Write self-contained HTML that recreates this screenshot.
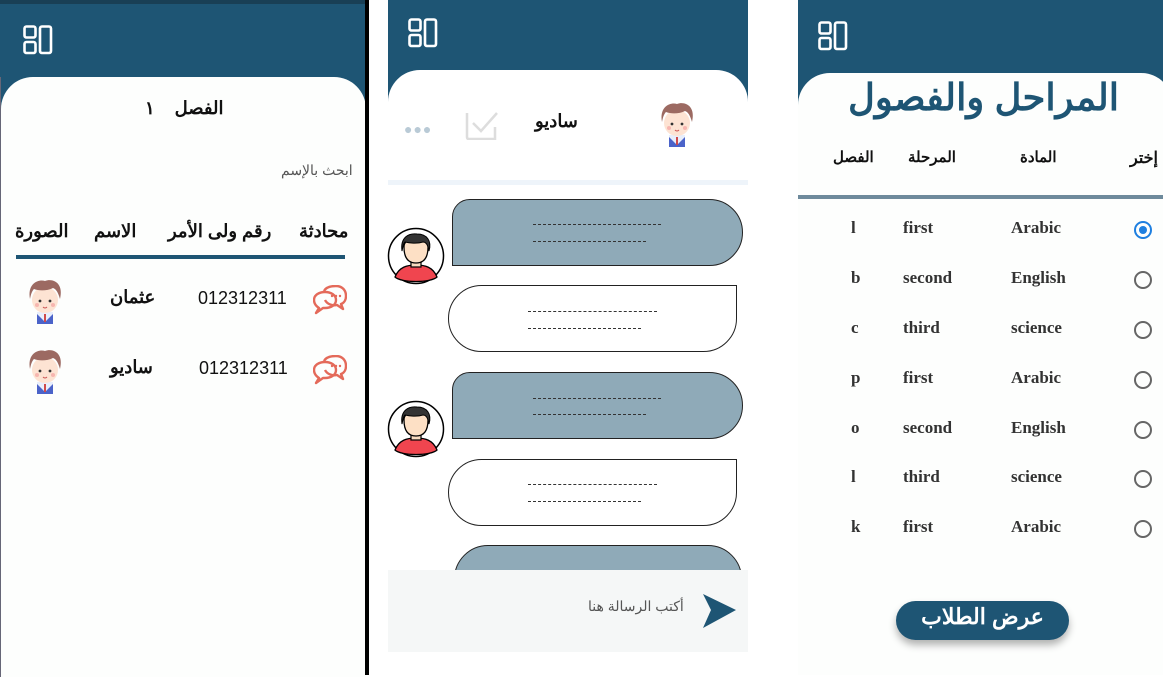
<!DOCTYPE html>
<html><head><meta charset="utf-8"><style>
*{margin:0;padding:0;box-sizing:border-box}
body{width:1163px;height:675px;background:#fff;position:relative;overflow:hidden;font-family:"Liberation Sans","Noto Sans CJK SC",sans-serif;color:#111}
.abs{position:absolute}
.hdr{background:#1e5574}
.card{background:#fdfefd;border-radius:32px 32px 0 0}
.t{position:absolute;white-space:nowrap;direction:rtl}
.dash{position:absolute;height:1px;border-top:1px dashed #333}
.rowtxt{position:absolute;font-family:"Liberation Serif",serif;font-size:17px;color:#333;font-weight:bold}
.radio{position:absolute;width:18px;height:18px;border:2px solid #666;border-radius:50%}
</style></head><body>

<svg width="0" height="0" style="position:absolute">
<defs>
<symbol id="menu" viewBox="0 0 30 30"><g fill="none" stroke="#fff" stroke-width="2.6"><rect x="1.5" y="1.5" width="11" height="11" rx="2"/><rect x="1.5" y="17" width="11" height="11" rx="2"/><rect x="17" y="1.5" width="11" height="26.5" rx="2"/></g></symbol>
<symbol id="kid" viewBox="0 0 40 46">
<rect x="12" y="34" width="16" height="12" fill="#e8eefb"/><path d="M12 36 L20 44 L28 36 L28 46 L12 46Z" fill="#4b63c9"/><rect x="19" y="36" width="2" height="8" fill="#d04a4a"/>
<ellipse cx="20" cy="22" rx="13" ry="13" fill="#fde3d3"/>
<path d="M5 21 C2 5 14 1 20 3 C28 0 39 5 35 21 C33 14 31 11 28 10 C22 13 14 13 9 11 C7 13 6 16 5 21Z" fill="#9c6a62"/>
<circle cx="15" cy="23" r="1.4" fill="#333"/><circle cx="25" cy="23" r="1.4" fill="#333"/>
<circle cx="12" cy="27" r="2" fill="#f7b6b0"/><circle cx="28" cy="27" r="2" fill="#f7b6b0"/>
<path d="M18 29 Q20 31 22 29" stroke="#c55" fill="none" stroke-width="1"/></symbol>
<symbol id="man" viewBox="0 0 58 58">
<circle cx="29" cy="29" r="27.5" fill="#fff" stroke="#000" stroke-width="1.5"/>
<path d="M8 50 C12 40 20 38 29 38 C38 38 46 40 50 50 C44 56 14 56 8 50Z" fill="#f0454f" stroke="#000" stroke-width="1.3"/>
<rect x="24" y="30" width="10" height="10" fill="#fadcc0" stroke="#000" stroke-width="1.2"/>
<path d="M17 20 Q17 36 29 36 Q41 36 41 20 Q41 12 29 12 Q17 12 17 20Z" fill="#fde0c5" stroke="#000" stroke-width="1.3"/>
<path d="M15 24 C13 10 22 6 30 7 C40 7 45 14 42 24 C41 18 39 15 36 15 C30 17 22 16 18 15 C16 17 16 20 15 24Z" fill="#333" stroke="#000" stroke-width="1"/></symbol>
<symbol id="chat" viewBox="0 0 34 32"><g fill="none" stroke="#e46a5a" stroke-width="2.4" stroke-linejoin="round">
<path d="M11 6 C13 2 18 1 23 1 C29 1 33 5 33 11 C33 15 31 18 28 19 L30 24 L24 20 C19 21 14 19 12 15"/>
<path d="M3 28 L6 23 C3 21 1 18 1 15 C1 10 6 7 12 7 C18 7 23 10 23 15 C23 20 18 23 12 23 L10 23 Z"/></g>
<g fill="#e46a5a"><circle cx="19" cy="11" r="1.2"/><circle cx="23" cy="11" r="1.2"/><circle cx="27" cy="11" r="1.2"/></g></symbol>
</defs></svg>

<!-- PANEL 1 -->
<div class="abs hdr" style="left:0;top:0;width:366px;height:200px"></div>
<div class="abs" style="left:0;top:0;width:366px;height:4px;background:#193f55"></div>
<svg class="abs" style="left:23px;top:25px" width="30" height="30"><use href="#menu"/></svg>
<div class="abs card" style="left:1px;top:77px;width:365px;height:600px"></div>
<div class="abs" style="left:0;top:77px;width:1px;height:600px;background:#667"></div>
<div class="abs" style="left:365px;top:0;width:4px;height:675px;background:#000"></div>
<div class="t" style="left:145px;top:98px;font-size:18px;font-weight:bold">الفصل&nbsp;&nbsp;&nbsp;&nbsp;١</div>
<div class="t" style="left:281px;top:162px;font-size:14px;color:#555">ابحث بالإسم</div>
<div class="t" style="left:299px;top:221px;font-size:18px;font-weight:bold">محادثة</div>
<div class="t" style="left:168px;top:221px;font-size:18px;font-weight:bold">رقم ولى الأمر</div>
<div class="t" style="left:94px;top:221px;font-size:18px;font-weight:bold">الاسم</div>
<div class="t" style="left:15px;top:221px;font-size:18px;font-weight:bold">الصورة</div>
<div class="abs" style="left:16px;top:255px;width:329px;height:4px;background:#1e5574"></div>
<svg class="abs" style="left:25px;top:278px" width="40" height="46"><use href="#kid"/></svg>
<svg class="abs" style="left:25px;top:348px" width="40" height="46"><use href="#kid"/></svg>
<div class="t" style="left:110px;top:287px;font-size:18px;font-weight:bold">عثمان</div>
<div class="t" style="left:110px;top:357px;font-size:18px;font-weight:bold">ساديو</div>
<div class="abs" style="left:198px;top:288px;font-size:18px">012312311</div>
<div class="abs" style="left:199px;top:358px;font-size:18px">012312311</div>
<svg class="abs" style="left:313px;top:285px" width="34" height="32"><use href="#chat"/></svg>
<svg class="abs" style="left:313px;top:355px" width="34" height="32"><use href="#chat"/></svg>

<!-- PANEL 2 -->
<div class="abs hdr" style="left:388px;top:0;width:360px;height:150px"></div>
<svg class="abs" style="left:408px;top:18px" width="30" height="30"><use href="#menu"/></svg>
<div class="abs card" style="left:388px;top:70px;width:360px;height:605px;background:#fff"></div>
<svg class="abs" style="left:657px;top:101px" width="40" height="46"><use href="#kid"/></svg>
<div class="t" style="left:535px;top:111px;font-size:18px;font-weight:bold">ساديو</div>
<svg class="abs" style="left:465px;top:107px" width="34" height="33"><path d="M2 6 L2 30 Q2 32 4 32 L30 32 L30 20 M8 16 L16 24 L32 6" fill="none" stroke="#ddd" stroke-width="2.5"/></svg>
<div class="abs" style="left:404px;top:121px;font-size:14px;color:#b9cad6;letter-spacing:1px">●●●</div>
<div class="abs" style="left:388px;top:180px;width:360px;height:5px;background:#eef4fa"></div>

<div class="abs" style="left:452px;top:199px;width:291px;height:67px;background:#8faab8;border:1.3px solid #222;border-radius:18px 34px 34px 0"></div>
<div class="dash" style="left:533px;top:224px;width:128px"></div><div class="dash" style="left:533px;top:241px;width:113px"></div>
<svg class="abs" style="left:387px;top:227px" width="58" height="58"><use href="#man"/></svg>
<div class="abs" style="left:448px;top:285px;width:289px;height:67px;background:#fff;border:1.3px solid #222;border-radius:34px 0 34px 34px"></div>
<div class="dash" style="left:528px;top:311px;width:129px"></div><div class="dash" style="left:528px;top:328px;width:113px"></div>

<div class="abs" style="left:452px;top:372px;width:291px;height:67px;background:#8faab8;border:1.3px solid #222;border-radius:18px 34px 34px 0"></div>
<div class="dash" style="left:533px;top:398px;width:128px"></div><div class="dash" style="left:533px;top:414px;width:113px"></div>
<svg class="abs" style="left:387px;top:400px" width="58" height="58"><use href="#man"/></svg>
<div class="abs" style="left:448px;top:459px;width:289px;height:67px;background:#fff;border:1.3px solid #222;border-radius:34px 0 34px 34px"></div>
<div class="dash" style="left:528px;top:484px;width:129px"></div><div class="dash" style="left:528px;top:501px;width:113px"></div>
<div class="abs" style="left:454px;top:545px;width:288px;height:60px;background:#8faab8;border:1.3px solid #222;border-radius:34px 34px 0 0"></div>
<div class="abs" style="left:388px;top:570px;width:360px;height:82px;background:#f5f7f7"></div>
<div class="t" style="left:588px;top:598px;font-size:14px;color:#555">أكتب الرسالة هنا</div>
<svg class="abs" style="left:703px;top:594px" width="33" height="34"><path d="M0 0 L33 16 L0 34 L8 16Z" fill="#1e5574"/></svg>

<!-- PANEL 3 -->
<div class="abs hdr" style="left:798px;top:0;width:365px;height:150px"></div>
<svg class="abs" style="left:818px;top:21px" width="30" height="30"><use href="#menu"/></svg>
<div class="abs card" style="left:798px;top:73px;width:375px;height:602px"></div>
<div class="t" style="left:848px;top:76px;font-size:37px;font-weight:bold;color:#1e5574">المراحل والفصول</div>
<div class="t" style="left:1130px;top:148px;font-size:16px;font-weight:bold">إختر</div>
<div class="t" style="left:1020px;top:148px;font-size:15px;font-weight:bold">المادة</div>
<div class="t" style="left:908px;top:148px;font-size:15px;font-weight:bold">المرحلة</div>
<div class="t" style="left:833px;top:148px;font-size:15px;font-weight:bold">الفصل</div>
<div class="abs" style="left:798px;top:195px;width:365px;height:4px;background:#6e8a9c"></div>

<div class="rowtxt" style="left:851px;top:218px">l</div><div class="rowtxt" style="left:903px;top:218px">first</div><div class="rowtxt" style="left:1011px;top:218px">Arabic</div>
<div class="radio" style="left:1134px;top:221px;border-color:#1e7fe0"><div style="position:absolute;left:3px;top:3px;width:8px;height:8px;border-radius:50%;background:#1e7fe0"></div></div>
<div class="rowtxt" style="left:851px;top:268px">b</div><div class="rowtxt" style="left:903px;top:268px">second</div><div class="rowtxt" style="left:1011px;top:268px">English</div><div class="radio" style="left:1134px;top:271px"></div>
<div class="rowtxt" style="left:851px;top:318px">c</div><div class="rowtxt" style="left:903px;top:318px">third</div><div class="rowtxt" style="left:1011px;top:318px">science</div><div class="radio" style="left:1134px;top:321px"></div>
<div class="rowtxt" style="left:851px;top:368px">p</div><div class="rowtxt" style="left:903px;top:368px">first</div><div class="rowtxt" style="left:1011px;top:368px">Arabic</div><div class="radio" style="left:1134px;top:371px"></div>
<div class="rowtxt" style="left:851px;top:418px">o</div><div class="rowtxt" style="left:903px;top:418px">second</div><div class="rowtxt" style="left:1011px;top:418px">English</div><div class="radio" style="left:1134px;top:421px"></div>
<div class="rowtxt" style="left:851px;top:467px">l</div><div class="rowtxt" style="left:903px;top:467px">third</div><div class="rowtxt" style="left:1011px;top:467px">science</div><div class="radio" style="left:1134px;top:470px"></div>
<div class="rowtxt" style="left:851px;top:517px">k</div><div class="rowtxt" style="left:903px;top:517px">first</div><div class="rowtxt" style="left:1011px;top:517px">Arabic</div><div class="radio" style="left:1134px;top:520px"></div>

<div class="abs" style="left:896px;top:601px;width:173px;height:39px;background:#1e5574;border-radius:20px;box-shadow:0 5px 8px rgba(0,0,0,0.3)"></div>
<div class="t" style="left:896px;top:604px;width:173px;text-align:center;font-size:22px;font-weight:bold;color:#fff">عرض الطلاب</div>
</body></html>
